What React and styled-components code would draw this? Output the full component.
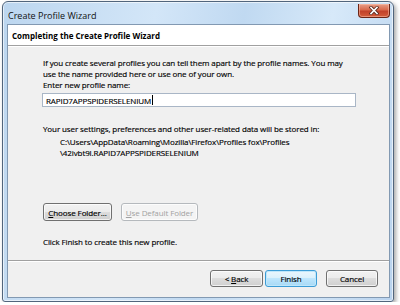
import React from "react";
import styled, { createGlobalStyle } from "styled-components";

const Global = createGlobalStyle`
  html, body {
    margin: 0;
    padding: 0;
    background: #ffffff;
  }
  body {
    font-family: "Open Sans", "Noto Sans", sans-serif;
    font-size: 8px;
    letter-spacing: -0.1px;
    color: #000;
    -webkit-text-stroke: 0.15px #000;
  }
`;

const Page = styled.div`
  padding: 1px 0 0 2px;
`;

const Window = styled.div`
  width: 392px;
  height: 301px;
  box-sizing: border-box;
  border: 1px solid #51657c;
  border-radius: 6px 6px 3px 3px;
  background: linear-gradient(100deg, #bcd6ef 0%, #d3e6f8 35%, #c0d9f1 55%, #d7e9f9 75%, #b9d3ee 100%);
  box-shadow: 2px 2px 4px rgba(0, 0, 0, 0.35), inset 0 0 0 1px rgba(255, 255, 255, 0.6);
  padding: 0 3px 3px 4px;
  display: flex;
  flex-direction: column;
`;

const TitleBar = styled.div`
  height: 22px;
  display: flex;
  align-items: flex-start;
  justify-content: space-between;
`;

const Title = styled.div`
  margin: 7px 0 0 1px;
  font-size: 9px;
  letter-spacing: 0;
  color: #111;
  -webkit-text-stroke: 0;
`;

const CloseButton = styled.div`
  width: 32px;
  height: 14px;
  margin: 2px 0 0 0;
  box-sizing: border-box;
  border: 1px solid #6b2416;
  border-top: none;
  border-radius: 0 0 4px 4px;
  background: linear-gradient(#e8a08a 0%, #d9694b 45%, #c2412a 55%, #d35c3a 100%);
  box-shadow: inset 0 0 0 1px rgba(255, 200, 180, 0.5);
  display: flex;
  align-items: center;
  justify-content: center;
`;

const Client = styled.div`
  flex: 1;
  border: 1px solid #8299b2;
  display: flex;
  flex-direction: column;
  background: #f0f0f0;
`;

const Header = styled.div`
  height: 20px;
  background: #ffffff;
  padding-left: 4px;
  display: flex;
  align-items: center;
  font-weight: 700;
  font-size: 8px;
  letter-spacing: 0;
  -webkit-text-stroke: 0;
  color: #000;
`;

const Divider = styled.div`
  height: 1px;
  background: #a0a0a0;
  border-bottom: 1px solid #ffffff;
`;

const Content = styled.div`
  flex: 1;
  padding: 10px 10px 0 35px;
  line-height: 11px;
  white-space: nowrap;
`;

const Para = styled.p`
  margin: ${(p) => p.$top || 0}px 0 0 ${(p) => p.$indent || 0}px;
`;

const TextInput = styled.div`
  margin-top: 3px;
  width: 314px;
  height: 14px;
  box-sizing: border-box;
  border: 1px solid #a9b6c6;
  background: #ffffff;
  margin-left: -1px;
  padding-left: 3px;
  display: flex;
  align-items: center;
`;

const Caret = styled.span`
  display: inline-block;
  width: 1px;
  height: 10px;
  background: #000;
  margin-left: 1px;
`;

const ButtonRow = styled.div`
  display: flex;
  gap: ${(p) => p.$gap || 9}px;
  margin-top: ${(p) => p.$top || 0}px;
  justify-content: ${(p) => (p.$end ? "flex-end" : "flex-start")};
`;

const Button = styled.div`
  width: ${(p) => p.$w}px;
  height: ${(p) => p.$h || 18}px;
  margin-left: ${(p) => p.$left || 0}px;
  box-sizing: border-box;
  border: 1px solid ${(p) => (p.$disabled ? "#b5b9bd" : p.$focus ? "#3c9cd6" : "#707070")};
  border-radius: 3px;
  background: ${(p) =>
    p.$disabled
      ? "#f4f4f4"
      : p.$focus
      ? "linear-gradient(#eaf6fd 0%, #d9f0fc 50%, #bee6fd 50%, #a7d9f5 100%)"
      : "linear-gradient(#f2f2f2 0%, #ebebeb 50%, #dddddd 50%, #cfcfcf 100%)"};
  box-shadow: ${(p) => (p.$focus ? "inset 0 0 0 1px #bfe7fb" : "inset 0 0 0 1px rgba(255,255,255,0.7)")};
  color: ${(p) => (p.$disabled ? "#a2a2a2" : "#000")};
  -webkit-text-stroke: ${(p) => (p.$disabled ? "0" : "0.15px #000")};
  display: flex;
  align-items: center;
  justify-content: center;
  white-space: nowrap;
`;

const Key = styled.span`
  text-decoration: underline;
`;

const Footer = styled.div`
  height: 35px;
  padding: 8px 11px 0 0;
  box-sizing: border-box;
`;

function CloseGlyph() {
  return (
    <svg width="10" height="9" viewBox="0 0 10 9">
      <path d="M2 1.5 L8 7.5 M8 1.5 L2 7.5" stroke="#5a2a20" strokeWidth="3.2" strokeLinecap="square" />
      <path d="M2 1.5 L8 7.5 M8 1.5 L2 7.5" stroke="#ffffff" strokeWidth="1.6" strokeLinecap="square" />
    </svg>
  );
}

export default function App() {
  return (
    <Page>
      <Global />
      <Window>
        <TitleBar>
          <Title>Create Profile Wizard</Title>
          <CloseButton>
            <CloseGlyph />
          </CloseButton>
        </TitleBar>
        <Client>
          <Header>Completing the Create Profile Wizard</Header>
          <Divider />
          <Content>
            <Para>
              If you create several profiles you can tell them apart by the profile names. You may
              <br />
              use the name provided here or use one of your own.
            </Para>
            <Para>Enter new profile name:</Para>
            <TextInput>
              RAPID7APPSPIDERSELENIUM
              <Caret />
            </TextInput>
            <Para $top={16}>Your user settings, preferences and other user-related data will be stored in:</Para>
            <Para $top={2} $indent={17}>
              C:\Users\AppData\Roaming\Mozilla\Firefox\Profiles fox\Profiles
              <br />
              \42ivbt9l.RAPID7APPSPIDERSELENIUM
            </Para>
            <ButtonRow $top={45}>
              <Button $w={69}>
                <span>
                  <Key>C</Key>hoose Folder...
                </span>
              </Button>
              <Button $w={77} $disabled>
                <span>
                  <Key>U</Key>se Default Folder
                </span>
              </Button>
            </ButtonRow>
            <Para $top={15}>Click Finish to create this new profile.</Para>
          </Content>
          <Divider />
          <Footer>
            <ButtonRow $end $gap={2}>
              <Button $w={53} $h={17}>
                <span>
                  &lt; <Key>B</Key>ack
                </span>
              </Button>
              <Button $w={52} $h={17} $focus>
                Finish
              </Button>
              <Button $w={52} $h={17} $left={7}>
                Cancel
              </Button>
            </ButtonRow>
          </Footer>
        </Client>
      </Window>
    </Page>
  );
}
